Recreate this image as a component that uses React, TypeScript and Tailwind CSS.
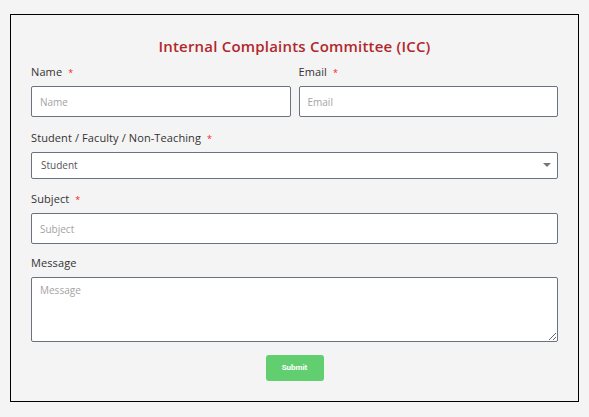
const font = { fontFamily: '"Open Sans", "Liberation Sans", sans-serif' }

function Label({ text, required }: { text: string; required?: boolean }) {
  return (
    <div className="h-[14px] text-[11px] leading-[14px] text-[#333] mb-[7px] tracking-[0.1px]">
      {text}
      {required && <span className="ml-[6px] text-[9px] leading-[0] text-[#ff2020]">*</span>}
    </div>
  )
}

const inputCls =
  "w-full h-[31px] rounded-[2px] border border-[#69727d] bg-white px-[8px] text-[10px] text-[#333] placeholder:text-[#a3a3a3] outline-none"

export default function App() {
  return (
    <div className="min-h-[417px] bg-[#f4f4f4] pt-[14px] pl-[10px]" style={font}>
      <div className="w-[569px] h-[388px] border border-black bg-[#f4f4f4] px-[20px] pt-[22px]">
        <h2 className="text-center text-[15px] leading-[18px] font-semibold text-[#b1282c] tracking-[0.2px]">
          Internal Complaints Committee (ICC)
        </h2>

        <div className="mt-[10px] grid grid-cols-2 gap-x-[8px]">
          <div>
            <Label text="Name" required />
            <input className={inputCls} placeholder="Name" />
          </div>
          <div>
            <Label text="Email" required />
            <input className={inputCls} placeholder="Email" />
          </div>
        </div>

        <div className="mt-[14px]">
          <Label text="Student / Faculty / Non-Teaching" required />
          <div className="relative">
            <div className="h-[27px] w-full rounded-[2px] border border-[#69727d] bg-white px-[9px] flex items-center text-[10px] text-[#555]">
              Student
            </div>
            <svg
              className="absolute right-[7px] top-[11px]"
              width="8"
              height="4"
              viewBox="0 0 8 4"
            >
              <path d="M0 0h8L4 4z" fill="#777" />
            </svg>
          </div>
        </div>

        <div className="mt-[13px]">
          <Label text="Subject" required />
          <input className={inputCls} placeholder="Subject" />
        </div>

        <div className="mt-[12px]">
          <Label text="Message" />
          <textarea
            className="block w-full h-[65px] rounded-[2px] border border-[#69727d] bg-white px-[8px] py-[5px] text-[10px] text-[#333] placeholder:text-[#a3a3a3] outline-none"
            placeholder="Message"
          />
        </div>

        <div className="mt-[13px] flex justify-center">
          <button
            className="h-[26px] w-[58px] rounded-[3px] bg-[#61ce70] text-[8px] font-bold text-white"
            style={{ fontFamily: '"Roboto", "Liberation Sans", sans-serif' }}
          >
            Submit
          </button>
        </div>
      </div>
    </div>
  )
}
